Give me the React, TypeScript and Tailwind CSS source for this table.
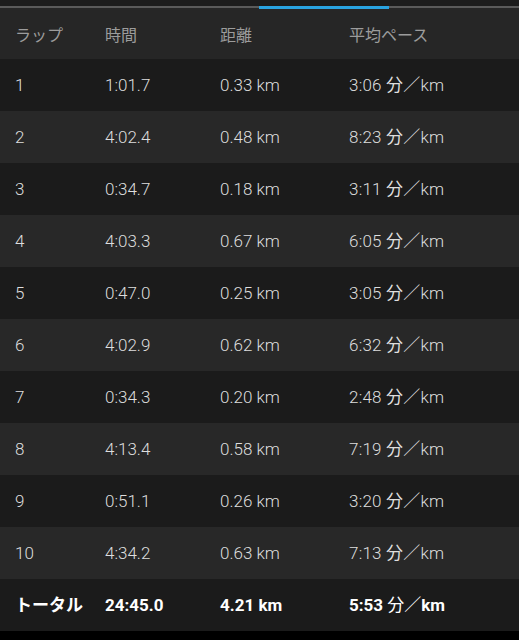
import React from 'react';

interface Lap {
  no: string;
  time: string;
  dist: string;
  pace: string;
}

const laps: Lap[] = [
  { no: '1', time: '1:01.7', dist: '0.33 km', pace: '3:06' },
  { no: '2', time: '4:02.4', dist: '0.48 km', pace: '8:23' },
  { no: '3', time: '0:34.7', dist: '0.18 km', pace: '3:11' },
  { no: '4', time: '4:03.3', dist: '0.67 km', pace: '6:05' },
  { no: '5', time: '0:47.0', dist: '0.25 km', pace: '3:05' },
  { no: '6', time: '4:02.9', dist: '0.62 km', pace: '6:32' },
  { no: '7', time: '0:34.3', dist: '0.20 km', pace: '2:48' },
  { no: '8', time: '4:13.4', dist: '0.58 km', pace: '7:19' },
  { no: '9', time: '0:51.1', dist: '0.26 km', pace: '3:20' },
  { no: '10', time: '4:34.2', dist: '0.63 km', pace: '7:13' },
];

const font = { fontFamily: 'Roboto, "Noto Sans CJK JP", sans-serif' };

const Row: React.FC<{ lap: Lap; even: boolean }> = ({ lap, even }) => (
  <div
    className={`flex items-center h-[52px] pt-[2px] text-[17px] font-light text-[#dedede] ${
      even ? 'bg-[#282828]' : 'bg-[#1b1b1b]'
    }`}
  >
    <span className="w-[105px] pl-[15px]">{lap.no}</span>
    <span className="w-[115px]">{lap.time}</span>
    <span className="w-[129px]">{lap.dist}</span>
    <span className="tracking-[0.2px]">
      {lap.pace} <span className="font-normal">分／</span>km
    </span>
  </div>
);

export default function App() {
  return (
    <div className="w-[519px] h-[640px] bg-black" style={font}>
      <div className="h-[6px] bg-[#1c1c1c]" />
      <div className="h-[3px] bg-[#262626] flex flex-col">
        <div className="h-[2px] bg-[#5a5a5a] flex">
          <div className="w-[259px]" />
          <div className="w-[130px] h-[3px] bg-[#29a3e0]" />
        </div>
      </div>
      <div className="flex items-center h-[50px] pt-[3px] bg-[#262626] text-[16px] text-[#9c9c9c]">
        <span className="w-[105px] pl-[15px]">ラップ</span>
        <span className="w-[115px]">時間</span>
        <span className="w-[129px]">距離</span>
        <span>平均ペース</span>
      </div>
      {laps.map((lap, i) => (
        <Row key={lap.no} lap={lap} even={i % 2 === 1} />
      ))}
      <div className="flex items-center h-[52px] pt-[2px] bg-[#1b1b1b] text-[17px] font-bold text-white">
        <span className="w-[105px] pl-[15px]">トータル</span>
        <span className="w-[115px]">24:45.0</span>
        <span className="w-[129px]">4.21 km</span>
        <span>
          5:53 <span className="font-normal">分／</span>km
        </span>
      </div>
    </div>
  );
}
